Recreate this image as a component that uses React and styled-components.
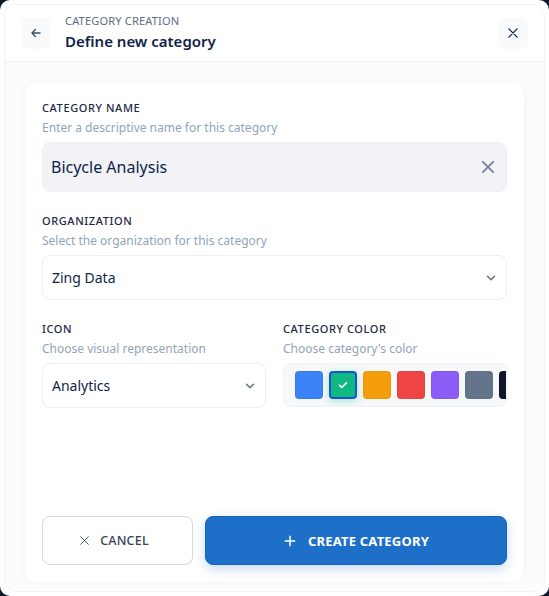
import React, { useState } from 'react';
import styled, { createGlobalStyle } from 'styled-components';

const GlobalStyle = createGlobalStyle`
  html, body {
    margin: 0;
    padding: 0;
    background: #111827;
  }
  * {
    box-sizing: border-box;
  }
  body {
    font-family: "Noto Sans", "Open Sans", sans-serif;
  }
`;

const Modal = styled.div`
  width: 549px;
  height: 596px;
  background: #ffffff;
  border-radius: 10px;
  padding: 4px;
  overflow: hidden;
`;

const Frame = styled.div`
  height: 100%;
  display: flex;
  flex-direction: column;
  border: 1px solid #f1f3f6;
  border-radius: 12px;
  overflow: hidden;
`;

const Header = styled.div`
  height: 57px;
  display: flex;
  align-items: center;
  padding: 0 16px;
  gap: 14px;
  border-bottom: 1px solid #f1f3f6;
  background: #ffffff;
`;

const IconButton = styled.button`
  width: 30px;
  height: 31px;
  border: none;
  border-radius: 7px;
  background: #f8fafb;
  display: flex;
  align-items: center;
  justify-content: center;
  padding: 0;
  color: ${({ tone }) => tone || '#0f1f4a'};
  cursor: pointer;
`;

const HeaderText = styled.div`
  flex: 1;
  display: flex;
  flex-direction: column;
  gap: 3px;
  margin-top: -2px;
`;

const Eyebrow = styled.span`
  font-size: 11px;
  line-height: 14px;
  letter-spacing: 0.2px;
  color: #5b6b86;
`;

const Title = styled.span`
  font-size: 15px;
  line-height: 20px;
  font-weight: 600;
  color: #0f1f4a;
`;

const Body = styled.div`
  flex: 1;
  background: #fcfcfd;
  padding: 21px 20px 9px 20px;
  display: flex;
`;

const Card = styled.div`
  flex: 1;
  background: #ffffff;
  border-radius: 12px;
  box-shadow: 0 0 10px rgba(15, 23, 42, 0.04);
  padding: 17px 17px 17px 17px;
  display: flex;
  flex-direction: column;
`;

const Field = styled.div`
  display: flex;
  flex-direction: column;
  margin-bottom: ${({ mb }) => mb || 0}px;
  min-width: 0;
`;

const Label = styled.span`
  font-size: 11px;
  line-height: 15px;
  letter-spacing: 0.6px;
  font-weight: 500;
  color: #1b2845;
  text-transform: uppercase;
`;

const Helper = styled.span`
  font-size: 12px;
  line-height: 17px;
  color: #94a3b8;
  margin-top: 4px;
  margin-bottom: 6px;
`;

const TextInput = styled.div`
  height: 50px;
  border-radius: 8px;
  background: #f1f3f6;
  border: 1px solid #eef0f3;
  display: flex;
  align-items: center;
  justify-content: space-between;
  padding: 0 9px 0 8px;
  font-size: 16px;
  color: #0f1f4a;
`;

const Select = styled.div`
  height: 45px;
  border-radius: 8px;
  background: #ffffff;
  border: 1px solid #eceef2;
  display: flex;
  align-items: center;
  justify-content: space-between;
  padding: 0 8px 0 9px;
  font-size: 14px;
  color: #0f1f4a;
`;

const Row = styled.div`
  display: grid;
  grid-template-columns: 1fr 1fr;
  gap: 17px;
`;

const Swatches = styled.div`
  height: 44px;
  border-radius: 8px;
  background: #f6f8fa;
  border: 1px solid #f0f2f5;
  display: flex;
  align-items: center;
  gap: 6px;
  padding: 0 11px;
  overflow: hidden;
`;

const Swatch = styled.div`
  flex: 0 0 28px;
  width: 28px;
  height: 28px;
  border-radius: 4px;
  background: ${({ color }) => color};
  border: ${({ selected }) => (selected ? '2px solid #1a56c9' : '1px solid rgba(0,0,0,0.04)')};
  box-shadow: ${({ selected }) => (selected ? '0 2px 8px rgba(16,185,129,0.35)' : 'none')};
  display: flex;
  align-items: center;
  justify-content: center;
`;

const Actions = styled.div`
  margin-top: auto;
  display: flex;
  gap: 12px;
`;

const CancelButton = styled.button`
  width: 151px;
  height: 49px;
  border-radius: 8px;
  border: 1px solid #d3d8e0;
  background: #ffffff;
  color: #334155;
  font-family: "Noto Sans", sans-serif;
  font-size: 12.5px;
  font-weight: 500;
  letter-spacing: 0.2px;
  display: flex;
  align-items: center;
  justify-content: center;
  gap: 9px;
  padding: 0 8px 0 0;
`;

const CreateButton = styled.button`
  flex: 1;
  height: 49px;
  border-radius: 8px;
  border: 1px solid #1463c2;
  background: #1e6fc8;
  color: #ffffff;
  font-family: "Noto Sans", sans-serif;
  font-size: 13px;
  font-weight: 700;
  letter-spacing: 0.2px;
  box-shadow: 0 4px 12px rgba(30, 111, 200, 0.25);
  display: flex;
  align-items: center;
  justify-content: center;
  gap: 11px;
`;

const Chevron = () => (
  <svg width="14" height="14" viewBox="0 0 24 24" fill="none" stroke="#64748b" strokeWidth="2.6" strokeLinecap="round" strokeLinejoin="round">
    <path d="M6 9l6 6 6-6" />
  </svg>
);

const Cross = ({ size = 14, color = 'currentColor', width = 2 }) => (
  <svg width={size} height={size} viewBox="0 0 24 24" fill="none" stroke={color} strokeWidth={width} strokeLinecap="round">
    <path d="M5 5l14 14M19 5L5 19" />
  </svg>
);

const colors = ['#3b82f6', '#10b981', '#f59e0b', '#ef4444', '#8b5cf6', '#64748b', '#0f172a', '#ec4899'];

export default function App() {
  const [selected, setSelected] = useState(1);

  return (
    <>
      <GlobalStyle />
      <Modal>
        <Frame>
          <Header>
            <IconButton tone="#3f4d68">
              <svg width="14" height="14" viewBox="0 0 24 24" fill="none" stroke="currentColor" strokeWidth="2.2" strokeLinecap="round" strokeLinejoin="round">
                <path d="M19 12H5M11 6l-6 6 6 6" />
              </svg>
            </IconButton>
            <HeaderText>
              <Eyebrow>CATEGORY CREATION</Eyebrow>
              <Title>Define new category</Title>
            </HeaderText>
            <IconButton>
              <Cross size={14} width={2.2} />
            </IconButton>
          </Header>
          <Body>
            <Card>
              <Field mb={21}>
                <Label>Category name</Label>
                <Helper>Enter a descriptive name for this category</Helper>
                <TextInput>
                  <span>Bicycle Analysis</span>
                  <Cross size={18} color="#64748b" width={2.2} />
                </TextInput>
              </Field>
              <Field mb={21}>
                <Label>Organization</Label>
                <Helper>Select the organization for this category</Helper>
                <Select>
                  <span>Zing Data</span>
                  <Chevron />
                </Select>
              </Field>
              <Row>
                <Field>
                  <Label>Icon</Label>
                  <Helper>Choose visual representation</Helper>
                  <Select>
                    <span>Analytics</span>
                    <Chevron />
                  </Select>
                </Field>
                <Field>
                  <Label>Category color</Label>
                  <Helper>Choose category's color</Helper>
                  <Swatches>
                    {colors.map((c, i) => (
                      <Swatch key={c} color={c} selected={i === selected} onClick={() => setSelected(i)}>
                        {i === selected && (
                          <svg width="12" height="12" viewBox="0 0 24 24" fill="none" stroke="#ffffff" strokeWidth="3.4" strokeLinecap="round" strokeLinejoin="round">
                            <path d="M5 12.5l4.5 4.5L19 7.5" />
                          </svg>
                        )}
                      </Swatch>
                    ))}
                  </Swatches>
                </Field>
              </Row>
              <Actions>
                <CancelButton>
                  <Cross size={13} color="#475569" width={1.8} />
                  CANCEL
                </CancelButton>
                <CreateButton>
                  <svg width="14" height="14" viewBox="0 0 24 24" fill="none" stroke="#ffffff" strokeWidth="2.6" strokeLinecap="round">
                    <path d="M12 4v16M4 12h16" />
                  </svg>
                  CREATE CATEGORY
                </CreateButton>
              </Actions>
            </Card>
          </Body>
        </Frame>
      </Modal>
    </>
  );
}
